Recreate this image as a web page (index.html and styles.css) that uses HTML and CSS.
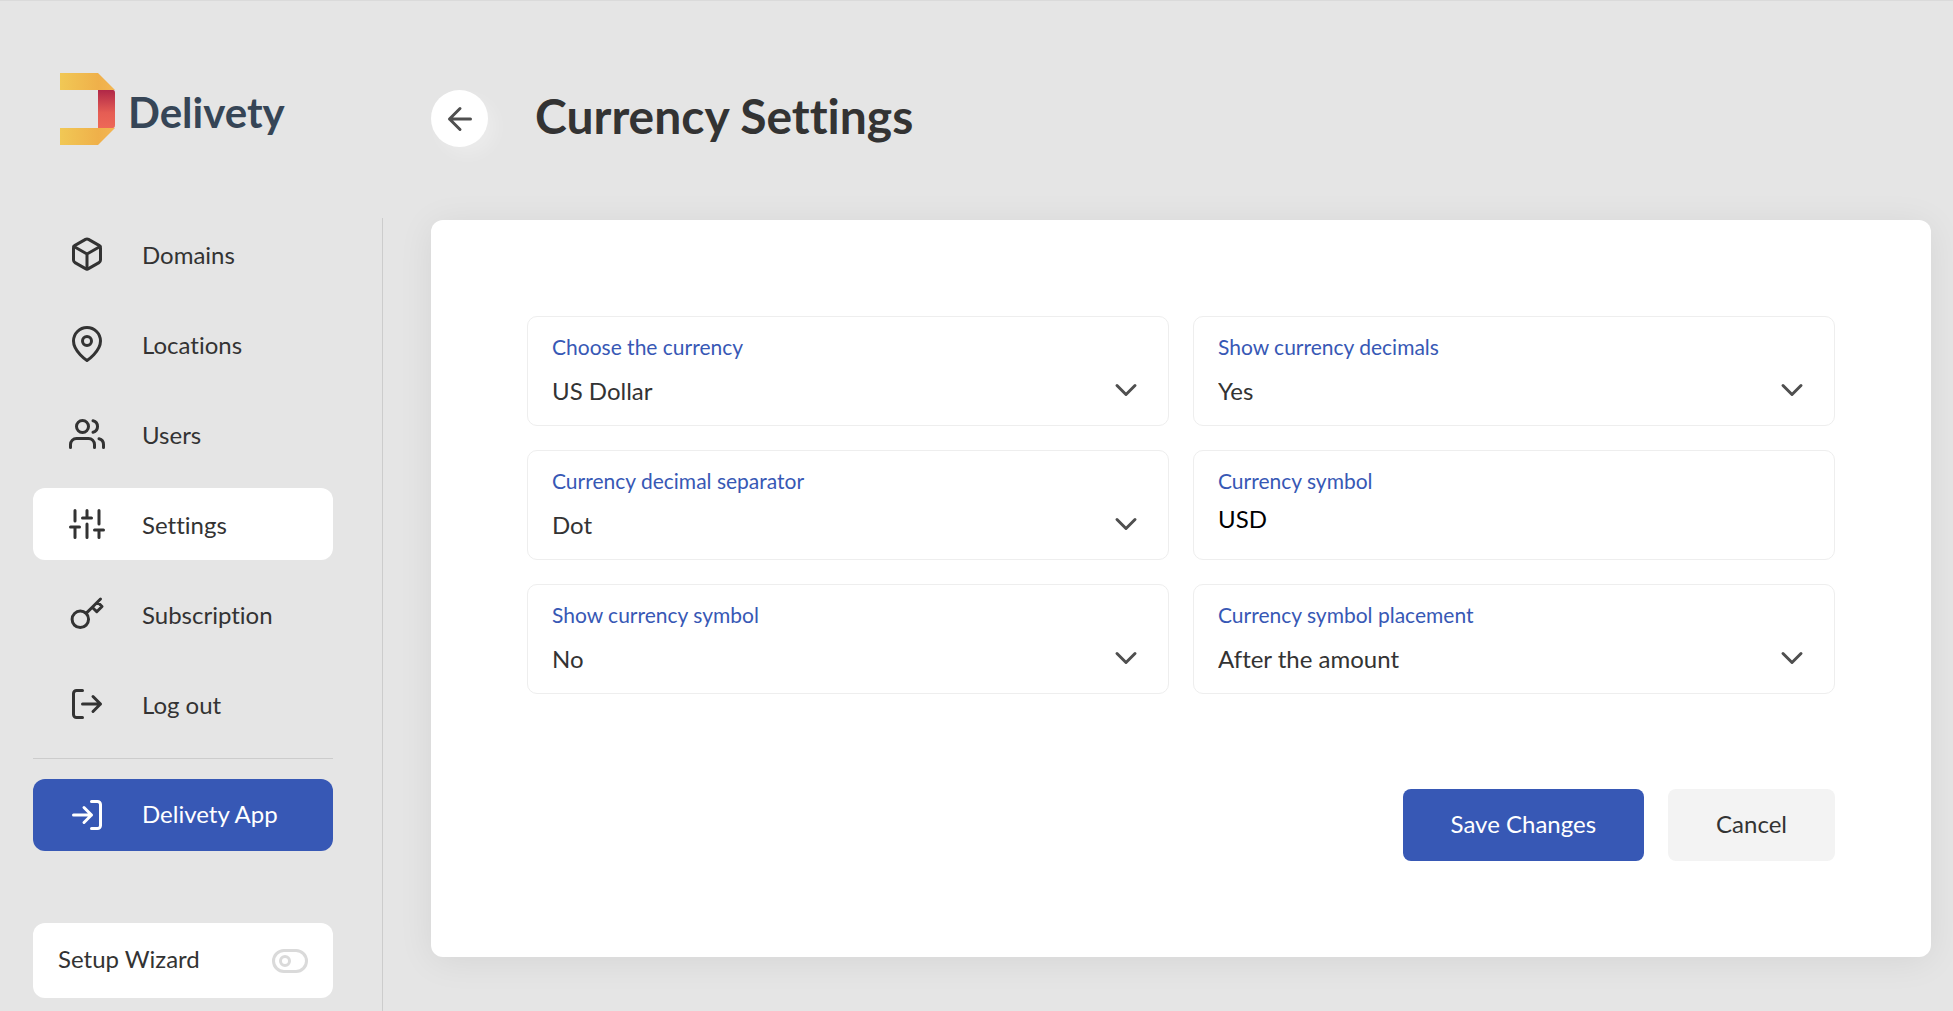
FILE: index.html
```html
<!DOCTYPE html>
<html lang="en">
<head>
    <meta charset="utf-8">
    <meta name="viewport" content="width=device-width, initial-scale=1">
    <title>Currency Settings - Delivety</title>
    <link rel="stylesheet" href="styles.css">
</head>
<body>
    <div class="layout">
        <aside class="sidebar">
            <a href="#" class="logo">
                <svg class="logo-mark" viewBox="0 0 55 72" aria-hidden="true">
                    <defs>
                        <linearGradient id="gold" x1="0" y1="0" x2="1" y2="0">
                            <stop offset="0" stop-color="#f1c855"/>
                            <stop offset="0.7" stop-color="#efb04a"/>
                            <stop offset="1" stop-color="#f3b653"/>
                        </linearGradient>
                        <linearGradient id="red" x1="0" y1="0" x2="0" y2="1">
                            <stop offset="0" stop-color="#b02747"/>
                            <stop offset="0.6" stop-color="#e55d54"/>
                            <stop offset="1" stop-color="#ee6857"/>
                        </linearGradient>
                    </defs>
                    <path d="M0 0h38l17 17H0z" fill="url(#gold)"/>
                    <path d="M0 72h38l17-17H0z" fill="url(#gold)"/>
                    <path d="M38 17h15q2 0 2 3v32q0 3-2 3H38z" fill="url(#red)"/>
                </svg>
                <span class="logo-text">Delivety</span>
            </a>

            <nav class="nav">
                <a href="#" class="nav-item">
                    <svg class="icon" viewBox="0 0 24 24"><path d="M21 16V8a2 2 0 0 0-1-1.73l-7-4a2 2 0 0 0-2 0l-7 4A2 2 0 0 0 3 8v8a2 2 0 0 0 1 1.73l7 4a2 2 0 0 0 2 0l7-4A2 2 0 0 0 21 16z"/><path d="M3.27 6.96L12 12.01l8.73-5.05M12 22.08V12"/></svg>
                    <span>Domains</span>
                </a>
                <a href="#" class="nav-item">
                    <svg class="icon" viewBox="0 0 24 24"><path d="M21 10c0 7-9 13-9 13s-9-6-9-13a9 9 0 0 1 18 0z"/><circle cx="12" cy="10" r="3"/></svg>
                    <span>Locations</span>
                </a>
                <a href="#" class="nav-item">
                    <svg class="icon" viewBox="0 0 24 24"><path d="M17 21v-2a4 4 0 0 0-4-4H5a4 4 0 0 0-4 4v2"/><circle cx="9" cy="7" r="4"/><path d="M23 21v-2a4 4 0 0 0-3-3.87M16 3.13a4 4 0 0 1 0 7.75"/></svg>
                    <span>Users</span>
                </a>
                <a href="#" class="nav-item active">
                    <svg class="icon" viewBox="0 0 24 24"><path d="M4 21v-7M4 10V3M12 21v-9M12 8V3M20 21v-5M20 12V3M1 14h6M9 8h6M17 16h6"/></svg>
                    <span>Settings</span>
                </a>
                <a href="#" class="nav-item">
                    <svg class="icon" viewBox="0 0 24 24"><path d="M21 2l-2 2m-7.61 7.61a5.5 5.5 0 1 1-7.778 7.778 5.5 5.5 0 0 1 7.777-7.777zm0 0L15.5 7.5m0 0l3 3L22 7l-3-3m-3.5 3.5L19 4"/></svg>
                    <span>Subscription</span>
                </a>
                <a href="#" class="nav-item">
                    <svg class="icon" viewBox="0 0 24 24"><path d="M9 3H5a2 2 0 0 0-2 2v14a2 2 0 0 0 2 2h4M16 17l5-5-5-5M21 12H9"/></svg>
                    <span>Log out</span>
                </a>

                <hr class="divider">

                <a href="#" class="nav-item app-link">
                    <svg class="icon" viewBox="0 0 24 24"><path d="M15 3h4a2 2 0 0 1 2 2v14a2 2 0 0 1-2 2h-4M10 17l5-5-5-5M15 12H3"/></svg>
                    <span>Delivety App</span>
                </a>

                <div class="wizard">
                    <label for="wizard">Setup Wizard</label>
                    <input type="checkbox" id="wizard" class="toggle">
                </div>
            </nav>
        </aside>

        <main class="main">
            <header class="header">
                <button type="button" class="back" aria-label="Back">
                    <svg class="icon" viewBox="0 0 24 24"><path d="M19 12H5M12 19l-7-7 7-7"/></svg>
                </button>
                <h1>Currency Settings</h1>
            </header>

            <form class="card">
                <div class="fields">
                    <div class="field">
                        <label for="currency">Choose the currency</label>
                        <div class="select">
                            <select id="currency">
                                <option>US Dollar</option>
                                <option>Euro</option>
                            </select>
                            <svg class="icon" viewBox="0 0 24 24"><path d="M6 9l6 6 6-6"/></svg>
                        </div>
                    </div>
                    <div class="field">
                        <label for="decimals">Show currency decimals</label>
                        <div class="select">
                            <select id="decimals">
                                <option>Yes</option>
                                <option>No</option>
                            </select>
                            <svg class="icon" viewBox="0 0 24 24"><path d="M6 9l6 6 6-6"/></svg>
                        </div>
                    </div>
                    <div class="field">
                        <label for="separator">Currency decimal separator</label>
                        <div class="select">
                            <select id="separator">
                                <option>Dot</option>
                                <option>Comma</option>
                            </select>
                            <svg class="icon" viewBox="0 0 24 24"><path d="M6 9l6 6 6-6"/></svg>
                        </div>
                    </div>
                    <div class="field">
                        <label for="symbol">Currency symbol</label>
                        <input type="text" id="symbol" value="USD">
                    </div>
                    <div class="field">
                        <label for="show-symbol">Show currency symbol</label>
                        <div class="select">
                            <select id="show-symbol">
                                <option>No</option>
                                <option>Yes</option>
                            </select>
                            <svg class="icon" viewBox="0 0 24 24"><path d="M6 9l6 6 6-6"/></svg>
                        </div>
                    </div>
                    <div class="field">
                        <label for="placement">Currency symbol placement</label>
                        <div class="select">
                            <select id="placement">
                                <option>After the amount</option>
                                <option>Before the amount</option>
                            </select>
                            <svg class="icon" viewBox="0 0 24 24"><path d="M6 9l6 6 6-6"/></svg>
                        </div>
                    </div>
                </div>

                <div class="actions">
                    <button type="submit" class="btn btn-primary">Save Changes</button>
                    <button type="button" class="btn">Cancel</button>
                </div>
            </form>
        </main>
    </div>
</body>
</html>
```

FILE: styles.css
```css
* {
    box-sizing: border-box;
}
body {
    margin: 0;
    background: #e5e5e5;
    color: #333;
    font-family: Lato, "Liberation Sans", sans-serif;
    font-size: 24px;
    line-height: 29px;
    font-variant-ligatures: none;
}
a {
    color: inherit;
    text-decoration: none;
}
button, input, select {
    font: inherit;
    color: inherit;
}
.layout {
    display: flex;
    min-height: 100vh;
    border-top: 1px solid #dadada;
}
.icon {
    width: 36px;
    height: 36px;
    flex: none;
    fill: none;
    stroke: currentColor;
    stroke-width: 2;
    stroke-linecap: round;
    stroke-linejoin: round;
}

/* sidebar */
.sidebar {
    flex: none;
    width: 383px;
    display: flex;
    flex-direction: column;
}
.logo {
    display: flex;
    align-items: center;
    gap: 13px;
    height: 217px;
    padding: 0 60px 1px;
}
.logo-mark {
    width: 55px;
    height: 72px;
}
.logo-text {
    padding-top: 6px;
    color: #364556;
    font-size: 42px;
    font-weight: 700;
    line-height: 50px;
}
.nav {
    flex: 1;
    padding: 0 49px 12px 33px;
    border-right: 1px solid #ccc;
}
.nav-item {
    display: flex;
    align-items: center;
    gap: 37px;
    height: 72px;
    padding: 0 36px;
    margin-bottom: 18px;
    border-radius: 12px;
}
.nav-item.active {
    background: #fff;
}
.divider {
    height: 1px;
    margin: 0 0 20px;
    border: none;
    background: #ccc;
}
.app-link {
    background: #3758b5;
    color: #fff;
    margin-bottom: 72px;
}
.app-link span {
    padding-bottom: 4px;
}
.wizard {
    display: flex;
    align-items: center;
    justify-content: space-between;
    height: 75px;
    padding: 0 25px;
    background: #fff;
    border-radius: 12px;
}
.wizard label {
    padding-bottom: 4px;
}
.toggle {
    appearance: none;
    width: 36px;
    height: 24px;
    margin: 0;
    padding: 3px 4px;
    border: 3px solid #dadada;
    border-radius: 12px;
}
.toggle::before {
    content: "";
    display: block;
    width: 6px;
    height: 6px;
    border: 3px solid #dadada;
    border-radius: 50%;
}

/* content */
.main {
    flex: 1;
    padding: 0 22px 54px 48px;
}
.header {
    display: flex;
    align-items: center;
    gap: 47px;
    height: 219px;
    padding-top: 16px;
}
h1 {
    margin: 0;
    padding-bottom: 6px;
    font-size: 48px;
    font-weight: 700;
    line-height: 58px;
}
.back {
    display: flex;
    align-items: center;
    justify-content: center;
    width: 57px;
    height: 57px;
    padding: 0;
    border: none;
    border-radius: 50%;
    background: #fff;
    color: #4f4f4f;
    box-shadow: 8px 8px 16px rgba(255, 255, 255, 0.25);
}
.card {
    padding: 96px;
    background: #fff;
    border-radius: 12px;
    box-shadow: 0 4px 36px rgba(0, 0, 0, 0.07);
}
.fields {
    display: grid;
    grid-template-columns: 1fr 1fr;
    gap: 24px;
}
.field {
    padding: 17px 24px 4px;
    border: 1px solid #eee;
    border-radius: 10px;
}
.field label {
    display: block;
    color: #3758b5;
    font-size: 21px;
    line-height: 25px;
}
.field input, .field select {
    display: block;
    width: 100%;
    padding: 0;
    border: none;
    outline: none;
    background: none;
}
.field input {
    height: 50px;
    color: #000;
}
.field select {
    appearance: none;
    height: 62px;
}
.select {
    position: relative;
}
.select .icon {
    position: absolute;
    top: 13px;
    right: 0;
    color: #4f4f4f;
    pointer-events: none;
}
.actions {
    display: flex;
    justify-content: flex-end;
    gap: 24px;
    margin-top: 95px;
}
.btn {
    height: 72px;
    padding: 0 48px 3px;
    border: none;
    border-radius: 8px;
    background: #f3f3f3;
    cursor: pointer;
}
.btn-primary {
    background: #3758b5;
    color: #fff;
}
```
